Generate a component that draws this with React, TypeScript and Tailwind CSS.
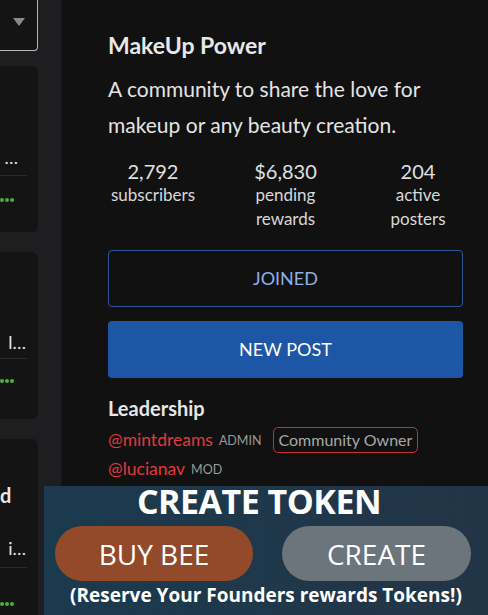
import { useState } from 'react'

const stats = [
  { value: '2,792', label: ['subscribers'] },
  { value: '$6,830', label: ['pending', 'rewards'] },
  { value: '204', label: ['active', 'posters'] },
]

function Dots() {
  return (
    <div className="flex gap-[1px] justify-end pr-[24px]">
      <span className="w-[4px] h-[4px] rounded-full bg-[#4caf3a]" />
      <span className="w-[4px] h-[4px] rounded-full bg-[#4caf3a]" />
      <span className="w-[4px] h-[4px] rounded-full bg-[#4caf3a]" />
    </div>
  )
}

export default function App() {
  const [joined] = useState(true)

  return (
    <div className="relative w-[488px] h-[615px] overflow-hidden flex bg-[#111111] text-[#e6e6e6]" style={{ fontFamily: 'Lato, "Noto Sans", sans-serif' }}>
      {/* left feed column, cut off */}
      <div className="w-[62px] shrink-0 bg-[#1e1e21] border-r border-[#18181a]">
        <div className="w-[38px] h-[51px] border-r border-b border-[#b9b9b9] rounded-br-[4px] bg-[#141414] flex justify-end pr-[12px] pt-[18px]">
          <svg width="12" height="8" viewBox="0 0 12 8"><path d="M0 0h12L6 8z" fill="#8a8a8a" /></svg>
        </div>

        <div className="mt-[15px] w-[38px] h-[166px] rounded-r-[6px] bg-[#141414] overflow-hidden">
          <div className="h-[81px]" />
          <div className="text-[18px] leading-[20px] text-right pr-[20px] whitespace-nowrap">…</div>
          <div className="mt-[8px] mr-[11px] border-t border-[#2a2a2a]" />
          <div className="mt-[22px]"><Dots /></div>
        </div>

        <div className="mt-[20px] w-[38px] h-[167px] rounded-r-[6px] bg-[#141414] overflow-hidden">
          <div className="h-[79px]" />
          <div className="text-[18px] leading-[22px] text-right pr-[12px] whitespace-nowrap">l…</div>
          <div className="mt-[5px] mr-[11px] border-t border-[#2a2a2a]" />
          <div className="mt-[20px]"><Dots /></div>
        </div>

        <div className="mt-[20px] w-[38px] h-[200px] rounded-r-[6px] bg-[#141414] overflow-hidden">
          <div className="h-[44px]" />
          <div className="text-[20px] leading-[24px] font-bold text-right pr-[29px]">d</div>
          <div className="mt-[30px] text-[18px] leading-[22px] text-right pr-[12px] whitespace-nowrap">i…</div>
          <div className="mt-[8px] mr-[11px] border-t border-[#2a2a2a]" />
          <div className="mt-[34px]"><Dots /></div>
        </div>
      </div>

      {/* community sidebar */}
      <div className="flex-1 pl-[46px] pr-[25px] pt-[29px]">
        <h2 className="text-[23px] leading-[32px] font-bold text-[#e8e8e8]">MakeUp Power</h2>
        <p className="mt-[10px] text-[21px] leading-[36px] text-[#e4e4e4]">
          A community to share the love for makeup or any beauty creation.
        </p>

        <div className="mt-[16px] flex justify-between">
          {stats.map((s) => (
            <div key={s.value} className="w-[90px] text-center">
              <div className="text-[20px] leading-[24px] text-[#e0e0e0]">{s.value}</div>
              {s.label.map((l) => (
                <div key={l} className="text-[17px] leading-[24px] text-[#d8d8d8]">{l}</div>
              ))}
            </div>
          ))}
        </div>

        <button className="mt-[19px] w-full h-[57px] rounded-[4px] border border-[#2d5596] text-[18px] text-[#8eaee6] bg-transparent">
          {joined ? 'JOINED' : 'JOIN'}
        </button>
        <button className="mt-[14px] w-full h-[57px] rounded-[4px] bg-[#1e56a6] text-[18px] text-white">
          NEW POST
        </button>

        <h3 className="mt-[17px] text-[20px] leading-[26px] font-bold text-[#e6e6e6]">Leadership</h3>
        <div className="mt-[6px] flex items-center">
          <span className="text-[17.5px] leading-[26px] text-[#e0393e]">@mintdreams</span>
          <span className="ml-[6px] mt-[3px] text-[12.5px] text-[#9a9a9a]">ADMIN</span>
          <span className="ml-[11px] px-[5px] h-[26px] flex items-center rounded-[5px] border border-[#c42f3a] text-[16px] text-[#a8a8a8]">Community Owner</span>
        </div>
        <div className="mt-[3px] flex items-center">
          <span className="text-[17.5px] leading-[26px] text-[#e0393e]">@lucianav</span>
          <span className="ml-[6px] mt-[3px] text-[12.5px] text-[#9a9a9a]">MOD</span>
        </div>
      </div>

      {/* promo overlay */}
      <div className="absolute left-[44px] top-[486px] right-0 bottom-0 bg-gradient-to-r from-[#1b3a4e] to-[#223546] flex flex-col items-center" style={{ fontFamily: '"Open Sans", sans-serif' }}>
        <div className="text-[34px] leading-[34px] font-bold text-white mt-[-2px] ml-[-14px] tracking-[-0.5px]">CREATE TOKEN</div>
        <div className="mt-[8px] w-full flex justify-between pl-[11px] pr-[17px]">
          <button className="w-[198px] h-[55px] rounded-full bg-[#924a2b] text-white text-[28px]">BUY BEE</button>
          <button className="w-[189px] h-[55px] rounded-full bg-[#6c757c] text-white text-[28px]">CREATE</button>
        </div>
        <div className="mt-[2px] text-[19px] leading-[24px] font-bold text-white">(Reserve Your Founders rewards Tokens!)</div>
      </div>
    </div>
  )
}
